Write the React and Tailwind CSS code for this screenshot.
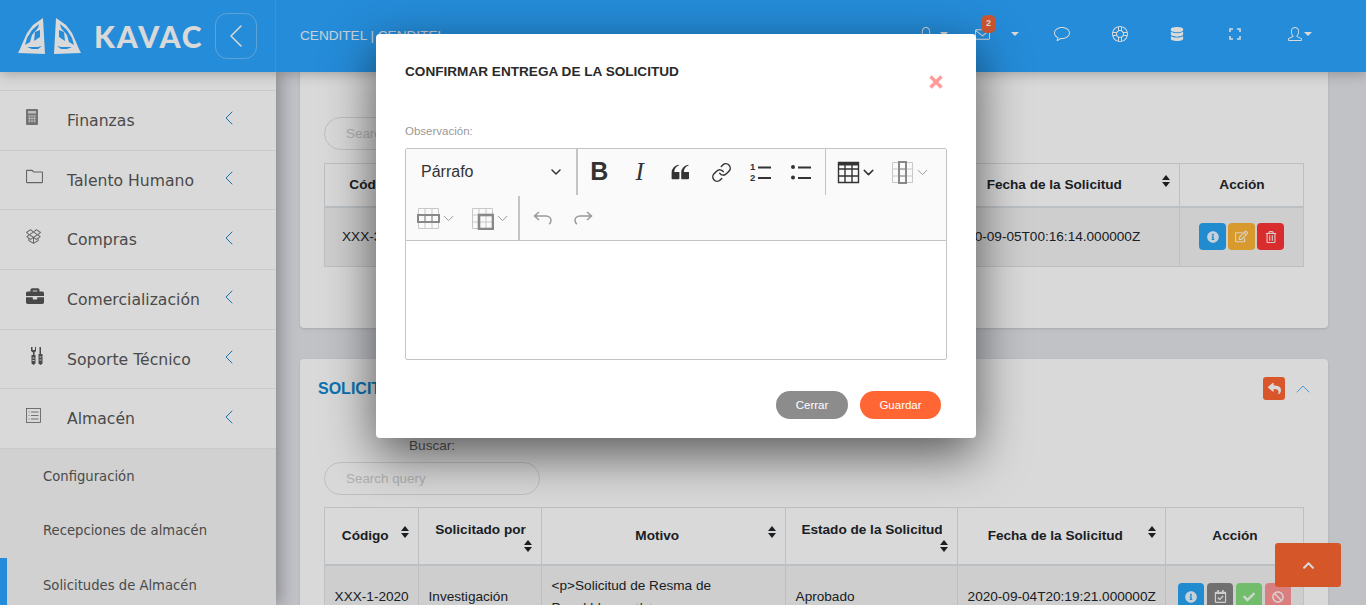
import { ChevronLeft, ChevronDown, ChevronUp, Link as LinkIcon } from 'lucide-react';
import { SlBell, SlBubble, SlEnvolope, SlFolder, SlSocialDropbox, SlSupport, SlUser } from 'react-icons/sl';
import { FaBan, FaBriefcase, FaCheck, FaChevronUp, FaDatabase, FaInfoCircle, FaRegCalendarCheck, FaRegEdit, FaRegTrashAlt, FaReply } from 'react-icons/fa';

const Caret = () => <span className="inline-block w-0 h-0 border-x-[4px] border-x-transparent border-t-[4px] border-t-white" />;

const Wing = () => (
  <path fillRule="evenodd" d="M25 0L27 36L0 35L2 31L5 24L9 15L15 7ZM21 6L14 12L9 20L7 27L12 24L14 17L20 10ZM17 14L22 12L22 19L16 23ZM9 29L14 31L20 31L24 28L20 29L14 29Z" />
);

const Logo = () => (
  <svg width="64" height="37" viewBox="0 0 64 37" fill="white">
    <Wing />
    <g transform="translate(63,0) scale(-1,1)"><Wing /></g>
  </svg>
);

const Fullscreen = () => (
  <svg width="12" height="12" viewBox="0 0 12 12" fill="none" stroke="white" strokeWidth="1.6">
    <path d="M1 4V1H4M8 1H11V4M11 8V11H8M4 11H1V8" />
  </svg>
);

const Calculator = () => (
  <svg width="12" height="16" viewBox="0 0 12 16">
    <rect width="12" height="16" rx="1" fill="#888" />
    <rect x="2" y="2" width="8" height="2.5" fill="#e0e0e0" />
    <path d="M2 7H10M2 9.5H10M2 12H10M3.5 6V13.5M6 6V13.5M8.5 6V13.5" stroke="#d8d8d8" strokeWidth="0.8" />
  </svg>
);

const Tools = () => (
  <svg width="14" height="18" viewBox="0 0 14 18" fill="#575757">
    <path d="M1 0V4L3 5.5V8H1.5V16.5L3.5 18L5.5 16.5V8H4.5V5.5L6 4V0L5 0V3H2.5V0Z" />
    <path d="M9.5 0H11V7H12.5V16.5L10.5 18L8.5 16.5V7H9.5Z" />
    <path d="M2.5 11H4.5M2.5 13.5H4.5M9.5 10H11.5M9.5 13H11.5" stroke="#f0f0f0" />
  </svg>
);

const ListBox = () => (
  <svg width="15" height="15" viewBox="0 0 15 15" fill="none" stroke="#666" strokeWidth="0.8">
    <rect x="0.5" y="0.5" width="14" height="14" />
    <path d="M2.5 4H3.5M5 4H12.5M2.5 7.5H3.5M5 7.5H12.5M2.5 11H3.5M5 11H12.5" />
  </svg>
);

const menu = [
  { label: 'Finanzas', icon: <Calculator /> },
  { label: 'Talento Humano', icon: <SlFolder size={17} className="text-[#777]" /> },
  { label: 'Compras', icon: <SlSocialDropbox size={15} className="text-[#777]" /> },
  { label: 'Comercialización', icon: <FaBriefcase size={18} className="text-[#555]" /> },
  { label: 'Soporte Técnico', icon: <span className="pl-1 flex"><Tools /></span> },
  { label: 'Almacén', icon: <ListBox /> },
];

const Sort = () => (
  <span className="float-right flex flex-col gap-[2px] ml-[5.5px]">
    <span className="w-0 h-0 border-x-[4.5px] border-x-transparent border-b-[5px] border-b-[#212529]" />
    <span className="w-0 h-0 border-x-[4.5px] border-x-transparent border-t-[5px] border-t-[#212529]" />
  </span>
);

const Th = ({ width, sort = true, children }) => (
  <th className={`${width} border border-[#dee2e6] border-b-2 pl-[10px] pr-[9px] pt-[1px] align-middle text-center font-bold leading-[20px]`}>
    {children}
    {sort && <Sort />}
  </th>
);

const Action = ({ color, children }) => (
  <span className={`${color} w-[26.5px] h-[27px] rounded-[4px] flex items-center justify-center text-white/90 shrink-0`}>{children}</span>
);

const Search = () => (
  <input
    placeholder="Search query"
    className="block w-[216px] h-[33px] rounded-full border border-[#dee2e6] bg-white px-[21px] text-[13.4px] placeholder:text-[#d0d0d0] outline-none"
  />
);

const Grid = ({ dark, children }) => (
  <svg width="23" height="23" viewBox="0 0 23 23" fill="none">
    <path d="M1.5 1.5H21.5V21.5H1.5ZM1.5 8H21.5M1.5 15H21.5M8 1.5V21.5M15 1.5V21.5" stroke={dark ? '#333' : '#c8c8c8'} strokeWidth={dark ? 1.4 : 1} />
    {children}
  </svg>
);

const ToolBtn = ({ children }) => <span className="w-[40.4px] h-[46px] flex items-center justify-center text-[#333]">{children}</span>;

const Drop = ({ children, gray }) => (
  <span className="w-[40px] mx-[7px] flex items-center justify-between h-[46px]">
    {children}
    <ChevronDown size={17} strokeWidth={gray ? 1.4 : 2} className={gray ? 'text-[#999]' : 'text-[#333]'} />
  </span>
);

const Modal = () => (
  <div className="absolute z-50 left-[376px] top-[34px] w-[600px] h-[404px] bg-white rounded-[4px] shadow-[0_16px_50px_0_rgba(0,0,0,0.6)] px-[29px] font-['Liberation_Sans',sans-serif]">
    <div className="flex justify-between h-[82px] pt-[29px]">
      <h6 className="text-[13.6px] leading-[18px] font-bold text-[#2a2a2a]">CONFIRMAR ENTREGA DE LA SOLICITUD</h6>
      <span className="text-[#ff9b9b] mt-[12px] mr-[4px]">
        <svg width="14" height="14" viewBox="0 0 14 14" stroke="currentColor" strokeWidth="3.4"><path d="M1.5 1.5L12.5 12.5M12.5 1.5L1.5 12.5" /></svg>
      </span>
    </div>
    <label className="block text-[11.5px] leading-[16px] text-[#999] mt-[7px] mb-[9px]">Observación:</label>
    <div className="w-[542px] h-[212px] border border-[#c4c4c4] rounded-[2px]">
      <div className="h-[92px] bg-[#fafafa] border-b border-[#c4c4c4]">
        <div className="flex h-[46px]">
          <div className="w-[172px] pl-[15px] pr-[12px] flex items-center justify-between border-r-2 border-[#c4c4c4] text-[16px] text-[#333]">
            Párrafo <ChevronDown size={16} strokeWidth={2.2} />
          </div>
          <div className="flex pl-[1px]">
            <ToolBtn><span className="font-bold text-[25px]">B</span></ToolBtn>
            <ToolBtn><span className="italic text-[25px] font-['Liberation_Serif',serif]">I</span></ToolBtn>
            <ToolBtn>
              <svg width="24" height="24" viewBox="0 0 20 20" fill="#333"><path d="M3 10.423a6.5 6.5 0 0 1 6.056-6.408l.038.67C6.448 5.423 5.354 7.663 5.22 10H9c.552 0 .5.432.5.986v4.511c0 .554-.448.503-1 .503h-5c-.552 0-.5-.449-.5-1.003v-4.574zm8 0a6.5 6.5 0 0 1 6.056-6.408l.038.67c-2.646.739-3.74 2.979-3.873 5.315H17c.552 0 .5.432.5.986v4.511c0 .554-.448.503-1 .503h-5c-.552 0-.5-.449-.5-1.003v-4.574z" /></svg>
            </ToolBtn>
            <ToolBtn><LinkIcon size={21} strokeWidth={1.7} className="ml-[3px]" /></ToolBtn>
            <ToolBtn>
              <svg width="22" height="20" viewBox="0 0 22 20" fill="#333">
                <text x="0" y="8" fontSize="9.5" fontWeight="700" fontFamily="Liberation Sans">1</text>
                <text x="0" y="19" fontSize="9.5" fontWeight="700" fontFamily="Liberation Sans">2</text>
                <path d="M8 5.5H21M8 16H21" stroke="#333" strokeWidth="1.8" />
              </svg>
            </ToolBtn>
            <ToolBtn>
              <svg width="22" height="20" viewBox="0 0 22 20" fill="#333">
                <circle cx="3" cy="5" r="2" /><circle cx="3" cy="15.5" r="2" />
                <path d="M8 5.5H21M8 16H21" stroke="#333" strokeWidth="1.8" />
              </svg>
            </ToolBtn>
          </div>
          <div className="ml-[4px] border-l border-[#c4c4c4] pl-[4px] flex">
            <Drop><Grid dark><rect x="1" y="1" width="21" height="3.5" fill="#333" /></Grid></Drop>
            <Drop gray><Grid><rect x="8" y="1" width="7" height="21" stroke="#888" strokeWidth="2" /><path d="M8 8H15M8 15H15" stroke="#888" /></Grid></Drop>
          </div>
        </div>
        <div className="flex h-[46px] items-center">
          <div className="flex pl-[4px] border-r-2 border-[#c4c4c4] h-[45px] pr-[0px]">
            <Drop gray><Grid><rect x="1" y="8" width="21" height="7" stroke="#888" strokeWidth="2" /><path d="M8 8V15M15 8V15" stroke="#888" /></Grid></Drop>
            <Drop gray><Grid><rect x="8" y="8" width="14" height="14" stroke="#888" strokeWidth="2.6" /></Grid></Drop>
          </div>
          <svg className="ml-[13px]" width="20" height="14" viewBox="0 0 20 14" fill="none" stroke="#999" strokeWidth="1.5"><path d="M6 1L1.5 5L6 9M1.5 5H13C16 5 18 7 18 9.5C18 11 17 12.5 16 13" /></svg>
          <svg className="ml-[20px]" width="20" height="14" viewBox="0 0 20 14" fill="none" stroke="#999" strokeWidth="1.5"><path d="M14 1L18.5 5L14 9M18.5 5H7C4 5 2 7 2 9.5C2 11 3 12.5 4 13" /></svg>
        </div>
      </div>
    </div>
    <div className="flex justify-end gap-[12px] mt-[31px] pr-[6px] text-[11.5px] text-white">
      <button className="w-[72px] h-[28px] pt-[1px] rounded-full bg-[#8c8c8c]">Cerrar</button>
      <button className="w-[81px] h-[28px] pt-[1px] rounded-full bg-[#ff6633]">Guardar</button>
    </div>
  </div>
);

export default function App() {
  return (
    <div className="relative w-[1366px] h-[605px] overflow-hidden flex flex-col bg-[#e3e4e9] font-['Liberation_Sans',sans-serif] text-[13.6px] text-[#212529]">
      <header className="relative z-20 h-[72px] shrink-0 flex bg-[#2ca5ff] text-white shadow-[0_2px_12px_rgba(0,0,0,0.25)]">
        <div className="w-[276px] shrink-0 border-r border-white/10 flex items-center pl-[18px]">
          <Logo />
          <span className="ml-[12px] w-[108px] font-['Lato',sans-serif] font-black text-[30px] tracking-[2px] leading-none">KAVAC</span>
          <span className="ml-[13px] w-[42px] h-[46px] rounded-[12px] border border-white/30 flex items-center justify-center">
            <ChevronLeft size={44} strokeWidth={0.9} />
          </span>
        </div>
        <div className="flex-1 flex items-center pl-[24px] text-white/90">CENDITEL | CENDITEL</div>
        <nav className="w-[466px] pb-[4px] flex items-center text-white">
          <span className="ml-[19px] flex"><SlBell size={14} /></span>
          <span className="ml-[7px] flex"><Caret /></span>
          <span className="relative ml-[27px] flex">
            <SlEnvolope size={15} />
            <span className="absolute -top-[12px] left-[6px] w-[15px] h-[18px] rounded-[6px] bg-[#f0653a] text-[9px] font-bold flex items-center justify-center">2</span>
          </span>
          <span className="ml-[21px] flex"><Caret /></span>
          <span className="ml-[35px] flex"><SlBubble size={16} /></span>
          <span className="ml-[42px] flex"><SlSupport size={16} /></span>
          <span className="ml-[42px] flex"><FaDatabase size={14} /></span>
          <span className="ml-[45px] flex"><Fullscreen /></span>
          <span className="ml-[47px] flex items-center gap-[2px]"><SlUser size={14} /><Caret /></span>
        </nav>
      </header>

      <div className="flex-1 min-h-0 flex">
        <aside className="relative z-10 w-[276px] shrink-0 bg-white pt-[18px] shadow-[4px_0_16px_rgba(0,0,0,0.3)] font-['DejaVu_Sans',sans-serif]">
          {menu.map(item => (
            <div key={item.label} className="h-[59.67px] border-t border-[#eeeeee] flex items-center pl-[26px] pr-[35px] text-[15.65px] text-[#575757]">
              <span className="w-[41px] -mt-[6px] flex">{item.icon}</span>
              <span className="flex-1 mt-[1px]">{item.label}</span>
              <ChevronLeft size={24} strokeWidth={1} className="text-[#1f88cc] -mt-[4px]" />
            </div>
          ))}
          <div className="relative border-t border-[#eeeeee] bg-[#f6f6f6] h-[160px] pl-[43px] text-[13.2px] text-[#575757]">
            <div className="h-[54.5px] pt-[18px]">Configuración</div>
            <div className="h-[54.5px] pt-[18px]">Recepciones de almacén</div>
            <div className="h-[54.5px] pt-[18px]">Solicitudes de Almacén</div>
            <span className="absolute left-0 top-[109px] w-[7px] h-[50px] bg-[#2ca5ff]" />
          </div>
        </aside>

        <main className="flex-1 min-w-0 pl-[24px] pr-[38px] overflow-hidden">
          <section className="h-[256px] bg-white rounded-b-[4px] px-[24px] pt-[45px] shadow-sm">
            <Search />
            <table className="mt-[13px] w-[979px] table-fixed border-collapse">
              <thead>
                <tr className="h-[43px]">
                  <Th width="w-[109px]">Código</Th>
                  <Th width="w-[120px]">Solicitado por</Th>
                  <Th width="w-[240px]">Motivo</Th>
                  <Th width="w-[148px]">Estado</Th>
                  <Th width="w-[238px]">Fecha de la Solicitud</Th>
                  <Th width="w-[124px]" sort={false}>Acción</Th>
                </tr>
              </thead>
              <tbody>
                <tr className="h-[60px] bg-[#f2f2f2]">
                  <td className="border border-[#dee2e6] px-[17px] whitespace-nowrap">XXX-3-2020</td>
                  <td className="border border-[#dee2e6]" />
                  <td className="border border-[#dee2e6]" />
                  <td className="border border-[#dee2e6]" />
                  <td className="border border-[#dee2e6] px-[10px] whitespace-nowrap">2020-09-05T00:16:14.000000Z</td>
                  <td className="border border-[#dee2e6]">
                    <div className="flex justify-center gap-[2.5px]">
                      <Action color="bg-[#27a4f5]"><FaInfoCircle size={12} /></Action>
                      <Action color="bg-[#ffb535]"><FaRegEdit size={13} /></Action>
                      <Action color="bg-[#ff3636]"><FaRegTrashAlt size={12} /></Action>
                    </div>
                  </td>
                </tr>
              </tbody>
            </table>
          </section>

          <section className="mt-[31px] h-[300px] bg-white rounded-[4px] px-[24px] shadow-sm">
            <div className="relative h-[79px] pt-[18px]">
              <span className="-ml-[6px] text-[16px] font-bold text-[#0c86cf]">SOLICITUDES</span>
              <span className="absolute right-[19px] top-[18px] w-[22px] h-[23px] rounded-[3px] bg-[#ff6633] flex items-center justify-center text-white"><FaReply size={13} /></span>
              <ChevronUp size={24} strokeWidth={0.8} className="absolute -right-[11px] top-[18px] text-[#2ca5ff]" />
            </div>
            <label className="block pl-[85px] leading-[16px] text-[#666] mb-[8px]">Buscar:</label>
            <Search />
            <table className="mt-[12px] w-[979px] table-fixed border-collapse">
              <thead>
                <tr className="h-[57px]">
                  <Th width="w-[94px]">Código</Th>
                  <Th width="w-[123px]">Solicitado por</Th>
                  <Th width="w-[244px]">Motivo</Th>
                  <Th width="w-[172px]">Estado de la Solicitud</Th>
                  <Th width="w-[208px]">Fecha de la Solicitud</Th>
                  <Th width="w-[138px]" sort={false}>Acción</Th>
                </tr>
              </thead>
              <tbody>
                <tr className="h-[64px] bg-[#f2f2f2] align-middle">
                  <td className="border border-[#dee2e6] px-[9.6px] whitespace-nowrap">XXX-1-2020</td>
                  <td className="border border-[#dee2e6] px-[9.6px]">Investigación</td>
                  <td className="border border-[#dee2e6] px-[9.6px] leading-[22px]">&lt;p&gt;Solicitud de Resma de<br />Papel blanco&lt;/p&gt;</td>
                  <td className="border border-[#dee2e6] px-[9.6px]">Aprobado</td>
                  <td className="border border-[#dee2e6] px-[9.6px] whitespace-nowrap">2020-09-04T20:19:21.000000Z</td>
                  <td className="border border-[#dee2e6]">
                    <div className="flex justify-center gap-[2.5px]">
                      <Action color="bg-[#27a4f5]"><FaInfoCircle size={12} /></Action>
                      <Action color="bg-[#848484]"><FaRegCalendarCheck size={13} /></Action>
                      <Action color="bg-[#86de7e]"><FaCheck size={12} /></Action>
                      <Action color="bg-[#ff9696]"><FaBan size={12} /></Action>
                    </div>
                  </td>
                </tr>
              </tbody>
            </table>
          </section>
        </main>
      </div>

      <button className="absolute z-30 left-[1275px] top-[543px] w-[66px] h-[44px] rounded-[3px] bg-[#fa6631] flex items-center justify-center text-white"><FaChevronUp size={13} /></button>
      <div className="absolute inset-0 z-40 bg-black/15" />
      <Modal />
    </div>
  );
}
